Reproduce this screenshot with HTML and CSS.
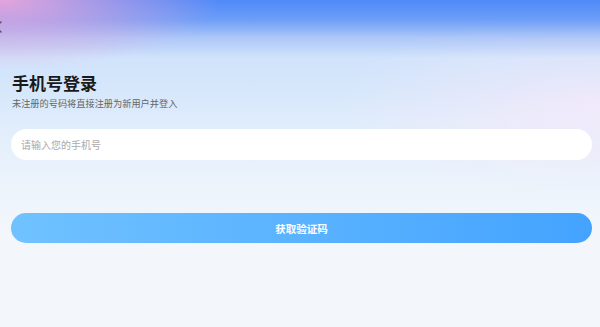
FILE: index.html
```html
<!DOCTYPE html>
<html lang="zh-CN">

<head>
  <meta charset="UTF-8">
  <title>手机号登录</title>
  <link rel="stylesheet" href="styles.css">
</head>

<body>
  <div class="page">
    <div class="nav-bar">
      <span class="back">
        <svg width="10" height="12" viewBox="0 0 10 12">
          <path d="M7 1 L2 6 L7 11" fill="none" stroke="#555" stroke-width="1.4" stroke-linecap="round" stroke-linejoin="round"/>
        </svg>
      </span>
    </div>

    <div class="login">
      <h1 class="title">手机号登录</h1>
      <p class="subtitle">未注册的号码将直接注册为新用户并登入</p>

      <div class="phone-field">
        <input type="tel" placeholder="请输入您的手机号">
      </div>

      <button class="get-code">获取验证码</button>
    </div>
  </div>
</body>

</html>
```

FILE: styles.css
```css
html,
body {
  margin: 0;
  padding: 0;
}

body {
  font-family: "Noto Sans CJK SC", "Noto Sans", sans-serif;
  background: #f3f7fc;
}

.page {
  position: relative;
  width: 600px;
  height: 327px;
  overflow: hidden;
  background:
    radial-gradient(ellipse 220px 70px at 0 0, rgba(236, 166, 218, 0.95), rgba(236, 166, 218, 0) 100%),
    linear-gradient(180deg, rgba(80, 138, 248, 1) 0px, rgba(92, 146, 247, 0.85) 20px, rgba(150, 180, 245, 0.6) 38px, rgba(210, 225, 250, 0.4) 58px, rgba(243, 247, 252, 0) 120px),
    radial-gradient(ellipse 260px 90px at 600px 100px, rgba(244, 234, 250, 1), rgba(244, 234, 250, 0)),
    linear-gradient(180deg, #d0e5fc 60px, #e6f0fb 150px, #f3f7fc 230px);
}

.nav-bar {
  height: 40px;
}

.back {
  position: absolute;
  left: -6px;
  top: 14px;
}

.login {
  padding: 0 8px 0 11px;
}

.title {
  margin: 32px 0 0 1px;
  font-size: 17px;
  line-height: 22px;
  font-weight: 700;
  color: #1a1a1a;
}

.subtitle {
  margin: 3px 0 0 1px;
  font-size: 9.2px;
  line-height: 13px;
  color: #666;
}

.phone-field {
  margin-top: 19px;
  height: 31px;
  background: #fff;
  border-radius: 16px;
  display: flex;
  align-items: center;
  padding: 0 10px;
}

.phone-field input {
  border: none;
  outline: none;
  background: transparent;
  width: 100%;
  font-family: inherit;
  font-size: 10px;
  color: #333;
  padding: 0;
}

.phone-field input::placeholder {
  color: #aaa;
}

.get-code {
  display: block;
  width: 100%;
  margin-top: 53px;
  height: 30px;
  border: none;
  border-radius: 15px;
  background: linear-gradient(90deg, #70c2ff, #44a3ff);
  color: #fff;
  font-family: inherit;
  font-size: 10.5px;
  font-weight: 700;
  padding: 0;
}
```
